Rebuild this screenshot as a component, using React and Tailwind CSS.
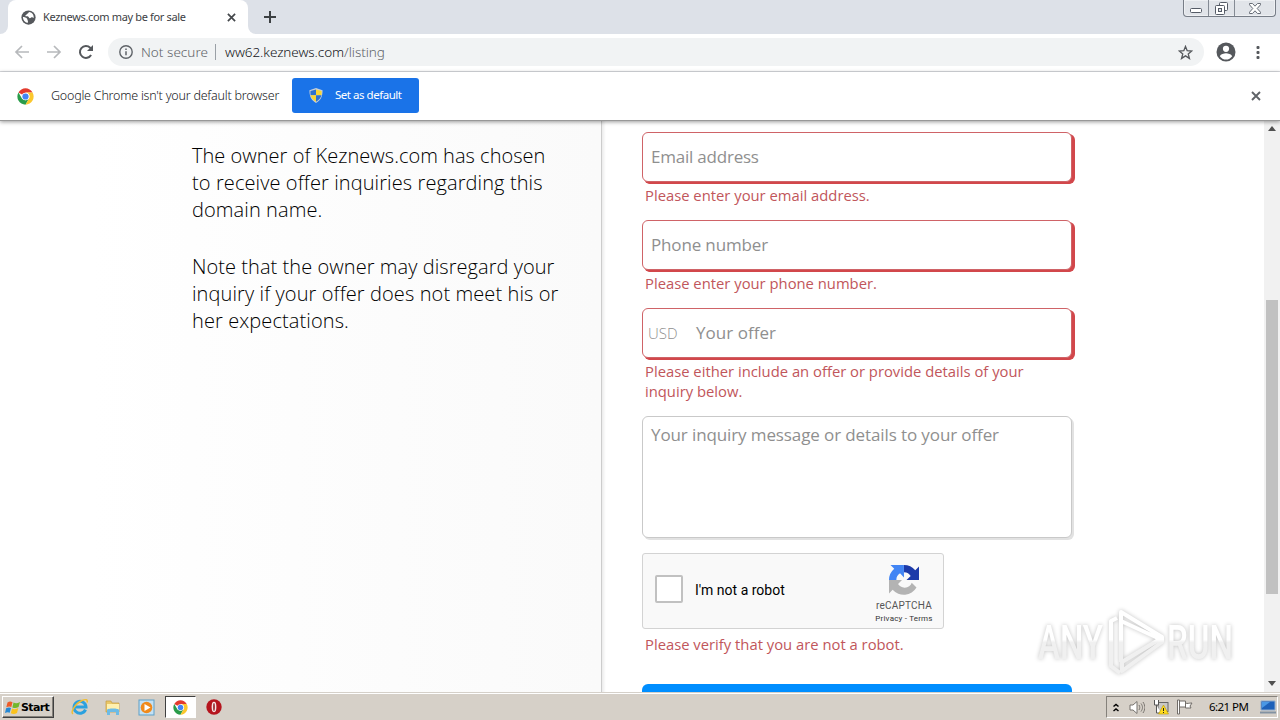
import React from "react";

const uiFont = 'font-["Noto_Sans","Open_Sans",sans-serif]';

const fields = [
  {
    label: "Email address",
    labelClass: "tracking-[-0.22px]",
    error: ["Please enter your email address."],
  },
  {
    label: "Phone number",
    labelClass: "tracking-[-0.15px]",
    error: ["Please enter your phone number."],
  },
  {
    prefix: "USD",
    label: "Your offer",
    labelClass: "tracking-[0.04px]",
    error: [
      "Please either include an offer or provide details of your",
      "inquiry below.",
    ],
  },
];

function ChromeLogo({ className }) {
  return (
    <svg viewBox="0 0 48 48" className={className}>
      <circle cx="24" cy="24" r="23" fill="#fff" />
      <path d="M24 24 4.1 12.5A23 23 0 0 1 43.9 12.5H24Z" fill="#e33b2e" />
      <path d="M4.1 12.5A23 23 0 0 0 24 47L34 29.8 24 34.5 14 29.8Z" fill="#2a9c4a" />
      <path d="M43.9 12.5A23 23 0 0 1 24 47L34 29.8A11.5 11.5 0 0 0 24 12.5Z" fill="#fbc72d" />
      <circle cx="24" cy="24" r="10.6" fill="#fff" />
      <circle cx="24" cy="24" r="8.8" fill="#4285f4" />
    </svg>
  );
}

function GlobeIcon() {
  return (
    <svg viewBox="0 0 16 16" className="h-[15px] w-[15px]">
      <circle cx="8" cy="8" r="7.6" fill="#55585c" />
      <path
        d="M8.6 2.2c-.9.5-.4 1.2-1.5 1.6-1.2.4-1 1.6-2.1 1.7-.8.1-.3 1.2.5 1.1 1.5-.2 2.6.3 3 1.5.3.9 1.6.6 2.3 0 .7-.6 1.8-.4 2.8.4C13.8 4.900 11.500 2.400 8.600 2.200Z"
        fill="#fff"
      />
      <path
        d="M2 7.500c1.600 0 3.400.5 4.500 1.700.6.7.1 1.400.7 2.100.6.6.1 1.500-.2 2.500C4.300 13.300 2.100 10.900 2 7.500Z"
        fill="#fff"
      />
    </svg>
  );
}

function CloseIcon({ className }) {
  return (
    <svg viewBox="0 0 10 10" className={className} fill="none" stroke="currentColor">
      <path d="m1 1 8 8M9 1 1 9" strokeWidth="1.9" />
    </svg>
  );
}

function Arrow({ className }) {
  return (
    <svg
      viewBox="0 0 16 14"
      className={className}
      fill="none"
      stroke="#b7b9bc"
      strokeWidth="1.7"
    >
      <path d="M15 7H2M8 1 2 7l6 6" />
    </svg>
  );
}

function WindowButtons() {
  return (
    <div className="ml-auto mr-[4px] flex h-[17px] w-[93px] rounded-b-[4px] border border-t-0 border-[#777d87] bg-[#e1e4e9] shadow-[inset_0_0_0_1px_#eef0f3]">
      <div className="flex w-[25px] items-end justify-center border-r border-[#858b94] pb-[3px]">
        <svg className="h-[5px] w-[12px]" viewBox="0 0 12 5">
          <rect x=".5" y=".5" width="11" height="4" rx="1" fill="#fff" stroke="#555b66" />
        </svg>
      </div>
      <div className="flex w-[26px] justify-center border-r border-[#858b94] pt-[2px]">
        <svg className="h-[13px] w-[13px]" viewBox="0 0 13 13" stroke="#555b66">
          <rect x="4.500" y=".5" width="8" height="8" rx="1" fill="#fff" />
          <rect x=".5" y="3.500" width="9" height="9" rx="1" fill="#fff" />
          <rect x="3.500" y="6.500" width="3" height="3" fill="#e1e4e9" />
        </svg>
      </div>
      <div className="flex flex-1 justify-center pt-[3px]">
        <svg className="h-[11px] w-[12px]" viewBox="0 0 12 11">
          <path
            d="M.5.5h3L6 3.200 8.500.5h3v1.300L8.200 5.500l3.300 3.700v1.300h-3L6 7.800l-2.500 2.700h-3V9.200l3.300-3.700L.5 1.800Z"
            fill="#fff"
            stroke="#666c76"
          />
        </svg>
      </div>
    </div>
  );
}

function TabStrip() {
  return (
    <div className="flex h-[34px] bg-[#dde1e8]">
      <div className="flex w-2 items-end bg-white">
        <div className="h-[34px] w-2 rounded-br-[8px] bg-[#dde1e8]" />
      </div>
      <div className="bg-[#dde1e8]">
        <div className="flex h-[34px] w-[240px] items-center rounded-t-[8px] bg-white pl-[13px]">
          <GlobeIcon />
          <span className={`${uiFont} ml-[7px] w-[184px] whitespace-nowrap text-[11px] tracking-[-0.34px] text-[#3c4043]`}>
            Keznews.com may be for sale
          </span>
          <CloseIcon className="h-[9px] w-[9px] text-[#44474b]" />
        </div>
      </div>
      <div className="w-2 bg-white">
        <div className="h-[34px] w-2 rounded-bl-[8px] bg-[#dde1e8]" />
      </div>
      <svg className="ml-[8px] mt-[11px] h-[12px] w-[12px]" viewBox="0 0 12 12" stroke="#3c4043" strokeWidth="2">
        <path d="M6 0v12M0 6h12" />
      </svg>
      <WindowButtons />
    </div>
  );
}

function Toolbar() {
  return (
    <div className={`${uiFont} flex h-[38px] items-center border-b border-[#dadce0] bg-white pb-px`}>
      <Arrow className="ml-[14px] h-[14px] w-[16px]" />
      <Arrow className="ml-[16px] h-[14px] w-[16px] rotate-180" />
      <svg className="ml-[16px] h-[16px] w-[16px]" viewBox="0 0 16 16">
        <path d="M13.100 11A6 6 0 1 1 12.200 3.700L14 5.500" fill="none" stroke="#55585c" strokeWidth="2" />
        <path d="M15 1v6H9Z" fill="#55585c" />
      </svg>
      <div className="ml-[14px] flex h-[28px] w-[1096px] items-center rounded-full bg-[#f1f3f4] pl-[11px] text-[14px]">
        <svg className="h-[14px] w-[14px]" viewBox="0 0 14 14">
          <circle cx="7" cy="7" r="6.200" fill="none" stroke="#5f6368" strokeWidth="1.400" />
          <path d="M7 6.200v4M7 3.400v1.500" stroke="#5f6368" strokeWidth="1.500" />
        </svg>
        <span className="ml-[8px] w-[67px] whitespace-nowrap text-[13.500px] font-light tracking-[0.03px] text-[#5f6368]">
          Not secure
        </span>
        <span className="ml-[7px] h-[16px] w-px bg-[#9aa0a6]" />
        <span className="ml-[9px] whitespace-nowrap text-[13.500px] font-light tracking-[-0.06px] text-[#5f6368]">
          <span className="text-[#111418]">ww62.keznews.com</span>/listing
        </span>
        <svg className="ml-auto mr-[11px] h-[15px] w-[15px]" viewBox="0 0 16 16">
          <path
            d="m8 1.500 1.800 4.600 4.900.3-3.800 3.100 1.300 4.800L8 11.600l-4.200 2.700 1.300-4.800-3.800-3.100 4.900-.3Z"
            fill="none"
            stroke="#55585c"
            strokeWidth="1.400"
          />
        </svg>
      </div>
      <svg className="ml-[12px] h-[20px] w-[20px]" viewBox="0 0 20 20">
        <circle cx="10" cy="10" r="9.500" fill="#55585c" />
        <circle cx="10" cy="6.800" r="3.100" fill="#fff" />
        <path d="M3.800 14.300c.9-2.200 4.200-3 6.200-3s5.300.8 6.200 3a7.600 7.600 0 0 1-12.400 0Z" fill="#fff" />
      </svg>
      <svg className="ml-[20px] mt-px h-[13px] w-[4px]" viewBox="0 0 4 13" fill="#55585c">
        <rect x=".5" width="3" height="3" rx="1" />
        <rect x=".5" y="5" width="3" height="3" rx="1" />
        <rect x=".5" y="10" width="3" height="3" rx="1" />
      </svg>
    </div>
  );
}

function ShieldIcon() {
  return (
    <svg className="h-[15px] w-[14px]" viewBox="0 0 14 16">
      <path d="M7 0 0 2.500C0 8.500 1.500 13 7 16c5.500-3 7-7.500 7-13.500Z" fill="#c6cfda" />
      <path d="M7 1.500v6.300H1.200C1 6 1 4.500 1.100 3.300Z" fill="#2e72cf" />
      <path d="M7 1.500v6.300h5.800c.2-1.800.2-3.300.1-4.500Z" fill="#f9d633" />
      <path d="M7 7.800v6.800C3.600 12.700 1.800 10.600 1.200 7.800Z" fill="#f9d633" />
      <path d="M7 7.800v6.800c3.400-1.900 5.200-4 5.800-6.800Z" fill="#2e72cf" />
    </svg>
  );
}

function InfoBar() {
  return (
    <div className={`${uiFont} relative z-10 flex h-[49px] items-center border-b border-[#989898] bg-white pb-px shadow-[0_1px_4px_rgba(0,0,0,0.4)]`}>
      <ChromeLogo className="ml-[17px] mt-px h-[17px] w-[17px]" />
      <span className="ml-[17px] mt-[2px] w-[241px] whitespace-nowrap text-[12.500px] font-light tracking-[-0.22px] text-[#202124]">
        Google Chrome isn't your default browser
      </span>
      <button type="button" className="flex h-[35px] w-[127px] items-center rounded-[3px] bg-[#1a73e8] pb-px pl-[17px] text-white">
        <ShieldIcon />
        <span className="ml-[12px] whitespace-nowrap text-[11.500px] tracking-[-0.47px]">
          Set as default
        </span>
      </button>
      <CloseIcon className="ml-auto mr-[19px] h-[10px] w-[10px] text-[#5f6368]" />
    </div>
  );
}

function Field({ prefix, label, labelClass, error }) {
  return (
    <div className="mb-[14px]">
      <div className="flex h-[50px] w-[430px] items-center rounded-[6px] border border-[#cf6367] bg-white pl-[8px] text-[17px] text-[#8f8f8f] shadow-[3px_2px_0_#d2474b,2px_2px_0_#d2474b]">
        {prefix && <span className="-ml-[3px] w-[48px] text-[15px] font-light">{prefix}</span>}
        <span className={labelClass}>{label}</span>
      </div>
      <ErrorText lines={error} />
    </div>
  );
}

function ErrorText({ lines }) {
  return (
    <div className="ml-[3px] pb-px pt-[3px] whitespace-nowrap text-[14.800px] leading-[20px] text-[#c1565b]">
      {lines.map((line) => (
        <p key={line}>{line}</p>
      ))}
    </div>
  );
}

function Recaptcha() {
  return (
    <div className="mt-[15px] flex h-[76px] w-[302px] rounded-[3px] border border-[#d3d3d3] bg-[#f9f9f9] font-[Roboto,sans-serif]">
      <div className="ml-[12px] mt-[21px] h-[28px] w-[28px] rounded-[2px] border-2 border-[#c1c1c1] bg-white" />
      <span className="ml-[12px] mt-[26px] w-[175px] text-[14px] leading-[20px] text-black">
        I'm not a robot
      </span>
      <div className="mt-[10px] flex w-[68px] flex-col items-center text-[#555]">
        <svg className="h-[32px] w-[32px]" viewBox="0 0 64 64">
          <path d="M62 31.900V5l-7.500 7.500A29.500 29.500 0 0 0 31.800 2v14.700c7 0 10.500 2.700 13.600 7.400L37 32Z" fill="#1c3aa9" />
          <path d="M31.800 2H5l7.500 7.500A29.500 29.500 0 0 0 2 32h14.700c0-7 2.700-10.500 7.400-13.600L32 27Z" fill="#4285f4" />
          <path d="M2 32v27l7.300-7.400A29.500 29.500 0 0 0 57 47L47.500 37.500c-2 6-7.500 10-14.200 9.800-6.300-.1-10-2.600-13.200-7.100L28 32Z" fill="#b3b3b3" />
        </svg>
        <span className="mt-[4px] text-[10px] leading-[12px] tracking-[0.2px]">reCAPTCHA</span>
        <span className="mt-[2px] whitespace-nowrap text-[8px] leading-[10px] tracking-[0.2px] text-[#333]">
          Privacy - Terms
        </span>
      </div>
    </div>
  );
}

function Scrollbar() {
  return (
    <div className="flex w-[16px] flex-col items-center bg-[#f1f1f1]">
      <svg className="mt-[5px] h-[5px] w-[8px]" viewBox="0 0 8 5">
        <path d="m0 5 4-5 4 5Z" fill="#505050" />
      </svg>
      <div className="mt-[169px] h-[294px] w-[12px] bg-[#c1c1c1]" />
      <svg className="mb-[6px] mt-auto h-[5px] w-[8px]" viewBox="0 0 8 5">
        <path d="m0 0 4 5 4-5Z" fill="#505050" />
      </svg>
    </div>
  );
}

function Watermark() {
  return (
    <svg
      className="absolute left-[1030px] top-[483px] h-[74px] w-[230px] overflow-visible drop-shadow-[0_0_2px_rgba(0,0,0,0.24)]"
      viewBox="0 0 230 74"
    >
      <defs>
        <linearGradient id="wm" gradientUnits="userSpaceOnUse" x1="0" y1="0" x2="0" y2="74">
          <stop offset="0.48" stopColor="#fff" />
          <stop offset="0.52" stopColor="#f0f0f0" />
        </linearGradient>
      </defs>
      <g fill="url(#wm)" fontFamily="Roboto" fontSize="49" fontWeight="500">
        <text x="8" y="55" textLength="65" lengthAdjust="spacingAndGlyphs">ANY</text>
        <text x="137" y="55" textLength="66" lengthAdjust="spacingAndGlyphs">RUN</text>
      </g>
      <g fill="none" stroke="url(#wm)" strokeWidth="4" strokeLinejoin="round">
        <path d="M87 14 81 17v45l9 7" />
        <path d="m91 8 41 25v5L92 67v-9l38-23L91 17ZM91 17v41" />
      </g>
    </svg>
  );
}

function Page() {
  return (
    <div className='relative flex h-[571px] overflow-hidden bg-white font-["Open_Sans",sans-serif]'>
      <div className="w-[602px] border-r border-[#ccc] bg-linear-to-r from-white from-15% to-[#fafafa] pl-[192px] pt-[21px] text-[20px] font-light leading-[27px] tracking-[0.1px] text-black">
        <div className="whitespace-nowrap">
          <p className="tracking-[0.02px]">The owner of Keznews.com has chosen</p>
          <p>to receive offer inquiries regarding this</p>
          <p>domain name.</p>
        </div>
        <div className="mt-[30px] whitespace-nowrap">
          <p className="tracking-[0.06px]">Note that the owner may disregard your</p>
          <p>inquiry if your offer does not meet his or</p>
          <p>her expectations.</p>
        </div>
      </div>
      <div className="flex-1 pl-[40px] pt-[11px] shadow-[inset_4px_0_3px_-2px_#ececec]">
        {fields.map((field) => (
          <Field key={field.label} {...field} />
        ))}
        <div className="h-[122px] w-[430px] rounded-[6px] border border-[#c9c9c9] bg-white pl-[8px] pt-[6px] text-[17px] leading-[24px] tracking-[-0.11px] text-[#8f8f8f] shadow-[2px_2px_0_#e2e2e2]">
          Your inquiry message or details to your offer
        </div>
        <Recaptcha />
        <div className="pt-[2px]">
          <ErrorText lines={["Please verify that you are not a robot."]} />
        </div>
        <div className="mt-[29px] h-[40px] w-[430px] rounded-[6px] bg-[#008eff]" />
      </div>
      <Scrollbar />
      <Watermark />
    </div>
  );
}

function StartButton() {
  return (
    <div className="ml-[2px] flex h-[22px] w-[52px] items-center border border-b-[#404040] border-l-white border-r-[#404040] border-t-white bg-[#d6d0c8] pl-[2px] shadow-[inset_-1px_-1px_0_#85817b]">
      <svg className="h-[15px] w-[16px]" viewBox="0 0 16 15">
        <path d="M2.500 2.500C4.500 1 6 1.300 7.500 2.200L6.300 7C5 6.200 3.200 6.300 1.300 7.300Z" fill="#ee5b28" />
        <path d="M8.500 2.600c2 1 4 .9 6.500-.5l-1.400 5c-2.200 1.300-4.200 1.300-6.200.3Z" fill="#73b72b" />
        <path d="M1.100 8.300C3 7.300 4.700 7.200 6 8l-1.300 4.800C3.500 12 1.900 12 0 13Z" fill="#2588d5" />
        <path d="M7.100 8.500c2 1 4 .9 6.200-.4L12 13c-2.300 1.300-4.200 1.200-6.200.2Z" fill="#fbc21d" />
      </svg>
      <span className='pt-[2px] font-["DejaVu_Sans",sans-serif] text-[11px] font-bold tracking-[-0.65px] text-black'>
        Start
      </span>
    </div>
  );
}

function Taskbar() {
  return (
    <div className="flex h-[28px] items-center border-t border-[#d5d0c9] bg-[#d6d0c8] pt-px shadow-[inset_0_1px_0_#fff]">
      <StartButton />
      <svg className="ml-[17px] h-[18px] w-[18px]" viewBox="0 0 18 18" fill="none">
        <path d="M14.500 11.700A6 6 0 1 1 15 9H4" stroke="#2ba1df" strokeWidth="3" />
        <path d="M2 16C-1 14 5 5 11 2.500c4-1.700 6-.8 5 2" stroke="#efbd35" strokeWidth="1.500" />
      </svg>
      <svg className="ml-[16px] h-[17px] w-[16px]" viewBox="0 0 16 17">
        <path d="M1 2h5l1 2h7v9H1Z" fill="#e9c768" stroke="#c59c3f" strokeWidth=".7" />
        <path d="M2 5h12v6H2Z" fill="#fff0ae" />
        <path d="M2 16v-5c0-2 12-2 12 0v5h-3v-3H5v3Z" fill="#6dbbe6" />
      </svg>
      <svg className="ml-[17px] h-[17px] w-[17px]" viewBox="0 0 17 17">
        <rect x="1" y="1" width="15" height="15" fill="#c4e1f4" stroke="#5c9fc8" />
        <circle cx="8.500" cy="8.500" r="5.800" fill="#f08a1c" />
        <path d="m6.500 5 6 3.500-6 3.500Z" fill="#fff" />
      </svg>
      <div className="ml-[10px] flex h-[22px] w-[31px] items-center justify-center border border-b-white border-l-[#404040] border-r-white border-t-[#404040] bg-white">
        <ChromeLogo className="h-[15px] w-[15px]" />
      </div>
      <svg className="ml-[10px] h-[16px] w-[16px]" viewBox="0 0 16 16">
        <circle cx="8" cy="8" r="7.700" fill="#b5141d" />
        <ellipse cx="8" cy="8" rx="2.400" ry="5.200" fill="#f6e6e6" />
        <ellipse cx="8" cy="8" rx="0.800" ry="4" fill="#8d1119" />
      </svg>
      <div className="ml-auto mr-[2px] flex h-[22px] w-[172px] items-center border border-b-white border-l-[#85817b] border-r-white border-t-[#85817b] pl-[6px]">
        <svg className="h-[9px] w-[6px]" viewBox="0 0 6 9" fill="none" stroke="#000" strokeWidth="1.500">
          <path d="m.5 3.500 2.500-2 2.500 2M.5 8 3 6l2.500 2" />
        </svg>
        <svg className="ml-[10px] h-[15px] w-[16px]" viewBox="0 0 16 15" fill="none" stroke="#77736e">
          <path d="M1 5h3l4-3.500v12L4 10H1Z" fill="#fff" />
          <path d="M10 5c1 2 1 3 0 5M12 3.500c2 3 2 5 0 8M14 2c2.500 4 2.500 7 0 11" />
        </svg>
        <svg className="ml-[8px] h-[16px] w-[16px]" viewBox="0 0 16 16">
          <rect x="5" y="3.500" width="10" height="9" fill="#c9c8c5" stroke="#666" />
          <path d="M1.500 1v5h4V1M3.500 6v8H8" fill="#fff" stroke="#555" />
          <path d="m10.500 6 5 9h-10Z" fill="#ffdc20" stroke="#b89700" strokeWidth=".6" />
          <path d="M10.500 9v3M10.500 13v1" stroke="#222" />
        </svg>
        <svg className="ml-[8px] h-[16px] w-[16px]" viewBox="0 0 16 16" fill="#fff" stroke="#716d68">
          <path d="M.5 1h2v14h-2ZM2.500 2h6v6h-6ZM8.500 4c2 1 3 0 6.500 0l-2 3 1 2H8.500Z" />
        </svg>
        <span className={`${uiFont} ml-[16px] w-[42px] whitespace-nowrap text-[11.500px] tracking-[-0.55px] text-black`}>
          6:21 PM
        </span>
        <svg className="ml-[9px] h-[14px] w-[16px]" viewBox="0 0 16 14">
          <path d="M1 1h14v9H1Z" fill="#1e61b9" stroke="#8faccc" />
          <path d="M2 2h8L2 8Z" fill="#4a98e5" />
          <path d="M0 11.500h16v2H0Z" fill="#8292a2" />
        </svg>
      </div>
    </div>
  );
}

export default function App() {
  return (
    <div className="flex h-[720px] w-[1280px] flex-col overflow-hidden bg-white">
      <TabStrip />
      <Toolbar />
      <InfoBar />
      <Page />
      <Taskbar />
    </div>
  );
}
